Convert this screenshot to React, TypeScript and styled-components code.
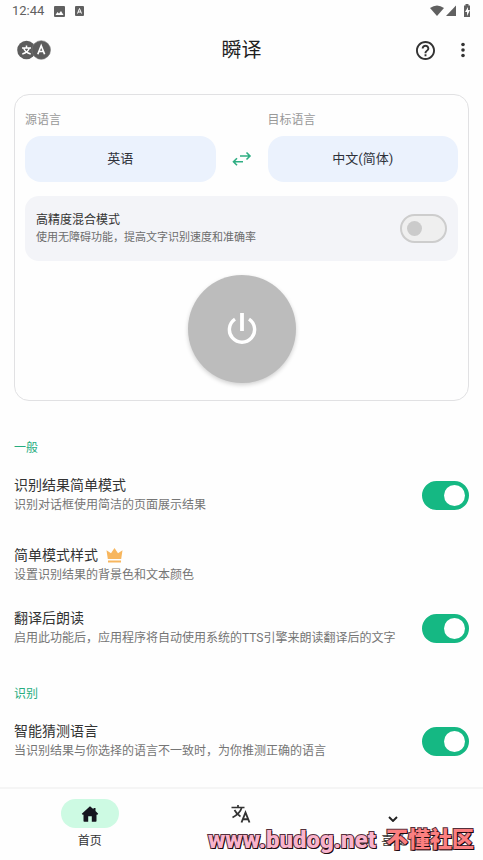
import React from "react";
import styled, { createGlobalStyle } from "styled-components";

const GlobalStyle = createGlobalStyle`
  *, *::before, *::after { box-sizing: border-box; }
  body {
    margin: 0;
    background: #fefefe;
    color: #2e2e30;
    font-family: Roboto, "Noto Sans CJK SC", sans-serif;
  }
  button, input { font: inherit; color: inherit; }
  button { border: 0; padding: 0; background: none; cursor: pointer; }
  h1, h2, p { margin: 0; font-weight: 400; }
  svg { display: block; }
`;

const Screen = styled.div`
  display: flex;
  flex-direction: column;
  min-height: 100vh;
`;

const StatusBar = styled.div`
  display: flex;
  align-items: center;
  justify-content: space-between;
  height: 22px;
  padding: 0 12px;
  color: #606060;
  font-size: 13px;
  line-height: 22px;
`;

const StatusGroup = styled.div`
  display: flex;
  align-items: center;
  gap: 10px;
`;

const AppBar = styled.header`
  display: grid;
  grid-template-columns: 1fr auto 1fr;
  align-items: center;
  height: 56px;
  padding: 0 14px;
`;

const Brand = styled.div`
  padding-left: 3px;
`;

const AppTitle = styled.h1`
  font-size: 20px;
  line-height: 28px;
  color: #1f1f1f;
`;

const Actions = styled.div`
  display: flex;
  align-items: center;
  justify-content: flex-end;
  gap: 22px;
  color: #333;
`;

const Content = styled.main`
  flex: 1;
  padding: 16px 14px 0;
`;

const Card = styled.section`
  display: flex;
  flex-direction: column;
  align-items: center;
  padding: 16px 10px 17px;
  border: 1px solid #e1e1e3;
  border-radius: 15px;
`;

const Languages = styled.div`
  display: grid;
  grid-template-columns: 1fr 52px 1fr;
  align-items: end;
  justify-items: center;
  width: 100%;
`;

const LanguageField = styled.div`
  display: flex;
  flex-direction: column;
  gap: 7px;
  width: 100%;
`;

const FieldLabel = styled.span`
  font-size: 12px;
  line-height: 18px;
  color: #999;
`;

const LanguageButton = styled.button`
  height: 46px;
  border-radius: 16px;
  background: #ebf2fd;
  font-size: 13px;
  line-height: 18px;
  color: #2e313a;
`;

const SwapButton = styled.button`
  display: flex;
  align-items: center;
  height: 46px;
  color: #2fae83;
`;

const ModePanel = styled.label`
  display: flex;
  align-items: center;
  justify-content: space-between;
  width: 100%;
  height: 65px;
  margin: 14px 0;
  padding: 0 11px;
  border-radius: 14px;
  background: #f3f4f8;
`;

const ModeTitle = styled.p`
  padding-top: 1px;
  font-size: 12px;
  line-height: 17px;
  color: #333;
`;

const ModeNote = styled.p`
  font-size: 11px;
  line-height: 17px;
  color: #6c6c6c;
`;

const Switch = styled.input.attrs({ type: "checkbox", role: "switch" })`
  appearance: none;
  flex: none;
  display: flex;
  align-items: center;
  width: 47px;
  height: 29px;
  margin: 0;
  padding: 0 5px;
  border: 2px solid #cdcdcd;
  border-radius: 15px;
  background: #efefef;

  &::before {
    content: "";
    width: 15px;
    height: 15px;
    border-radius: 50%;
    background: #cbcbcb;
  }

  &:checked {
    justify-content: flex-end;
    padding: 0 2px;
    border-color: #15b883;
    background: #15b883;
  }

  &:checked::before {
    width: 21px;
    height: 21px;
    background: #fff;
  }
`;

const PowerButton = styled.button`
  display: flex;
  align-items: center;
  justify-content: center;
  width: 108px;
  height: 108px;
  border-radius: 50%;
  background: #bcbcbc;
  color: #fff;
  box-shadow: 0 2px 4px rgba(0, 0, 0, 0.18);
`;

const SectionTitle = styled.h2<{ $top: number }>`
  margin-top: ${(p) => p.$top}px;
  font-size: 12px;
  line-height: 18px;
  color: #27ad80;
`;

const Setting = styled.label<{ $top: number }>`
  display: flex;
  align-items: center;
  justify-content: space-between;
  margin-top: ${(p) => p.$top}px;
`;

const SettingTitle = styled.p`
  display: flex;
  align-items: center;
  gap: 8px;
  font-size: 14px;
  line-height: 20px;
  color: #333;
`;

const SettingNote = styled.p`
  font-size: 12px;
  line-height: 20px;
  color: #757575;
`;

const NavBar = styled.nav`
  position: relative;
  display: grid;
  grid-template-columns: repeat(3, 1fr);
  align-items: start;
  height: 73px;
  padding: 10px 14px 0;
  border-top: 2px solid #f5f5f5;
`;

const NavItem = styled.button`
  display: flex;
  flex-direction: column;
  align-items: center;
  gap: 3px;
  font-size: 12px;
  line-height: 20px;
  color: #333;
`;

const NavIcon = styled.span<{ $active?: boolean }>`
  display: flex;
  align-items: center;
  justify-content: center;
  width: 58px;
  height: 29px;
  border-radius: 15px;
  background: ${(p) => (p.$active ? "#cdfae3" : "transparent")};
`;

const Watermark = styled.div`
  position: absolute;
  right: 9px;
  bottom: 5px;
  display: flex;
  align-items: center;
  gap: 10px;
  line-height: 30px;
  white-space: nowrap;
  pointer-events: none;
`;

const WatermarkText = styled.span<{ $fill: string; $size: number }>`
  font-size: ${(p) => p.$size}px;
  font-weight: 900;
  color: ${(p) => p.$fill};
  -webkit-text-stroke: 2px #54303c;
  paint-order: stroke fill;
  text-shadow: 1px 1px #1c0a0e;
`;

const ImageIcon = () => (
  <svg width="11" height="11" viewBox="0 0 22 22" fill="currentColor" aria-hidden="true">
    <path fillRule="evenodd" d="M2 0h18a2 2 0 0 1 2 2v18a2 2 0 0 1-2 2H2a2 2 0 0 1-2-2V2a2 2 0 0 1 2-2Zm1 18h16l-5-8-4 5-3-3Z" />
  </svg>
);

const LetterIcon = () => (
  <svg width="9" height="10" viewBox="0 0 18 20" aria-hidden="true">
    <rect width="18" height="20" rx="2" fill="currentColor" />
    <path d="m5 15 4-10 4 10M6 12h6" fill="none" stroke="#fff" strokeWidth="2" />
  </svg>
);

const SignalIcons = () => (
  <svg width="41" height="14" viewBox="0 0 41 14" fill="currentColor" aria-hidden="true">
    <path d="M0 4Q7-1 14 4L7 12Z" />
    <path d="M26 1.500V12H16Z" />
    <path fillRule="evenodd" d="M34 1.500H35.500V0h3v1.500H40v11.500h-6ZM38 3l-3 5h2v4l3-6h-2Z" />
  </svg>
);

const BrandIcon = () => (
  <svg width="34" height="20" viewBox="0 0 34 20" role="img" aria-label="翻译">
    <circle cx="9.500" cy="10" r="9.300" fill="#5d5d5d" />
    <circle cx="24.200" cy="10" r="9.300" fill="#5d5d5d" stroke="#777" strokeWidth=".6" />
    <g fill="none" stroke="#fff" strokeWidth="1.500">
      <path d="M5 8h9M9.500 5.500V8M12.300 8Q11 12.500 5.300 14M6.700 8Q8 12.500 13.700 14" />
      <path d="m20.800 14.200 3.400-8.400 3.400 8.400M21.900 11.500h4.600" strokeWidth="1.700" />
    </g>
  </svg>
);

const HelpIcon = () => (
  <svg width="19" height="19" viewBox="2 2 20 20" fill="currentColor" aria-hidden="true">
    <path d="M11 18h2v-2h-2v2zm1-16C6.480 2 2 6.480 2 12s4.480 10 10 10 10-4.480 10-10S17.520 2 12 2zm0 18c-4.410 0-8-3.590-8-8s3.590-8 8-8 8 3.590 8 8-3.590 8-8 8zm0-14c-2.210 0-4 1.790-4 4h2c0-1.100.9-2 2-2s2 .9 2 2c0 2-3 1.750-3 5h2c0-2.250 3-2.500 3-5 0-2.210-1.790-4-4-4z" />
  </svg>
);

const MoreIcon = () => (
  <svg width="12" height="16" viewBox="0 0 12 16" fill="currentColor" aria-hidden="true">
    <circle cx="6" cy="2.500" r="1.800" />
    <circle cx="6" cy="8" r="1.800" />
    <circle cx="6" cy="13.500" r="1.800" />
  </svg>
);

const SwapIcon = () => (
  <svg width="20" height="16" viewBox="0 0 20 16" fill="none" stroke="currentColor" strokeWidth="1.600" aria-hidden="true">
    <path d="M8 5h10M14.500 1.500 18 5l-3.500 3.500M11 10.700H1.500M5 7.200 1.500 10.700l3.500 3.500" />
  </svg>
);

const PowerIcon = () => (
  <svg width="32" height="34" viewBox="0 0 32 34" fill="none" stroke="currentColor" strokeWidth="3.400" aria-hidden="true">
    <path d="M16 1v18" strokeWidth="3.800" />
    <path d="M9 7.200a12.600 12.600 0 1 0 14 0" />
  </svg>
);

const CrownIcon = () => (
  <svg width="17" height="15" viewBox="0 0 17 15" fill="#f7b65e" role="img" aria-label="高级功能">
    <path d="m.5 2.200 4.500 3L8.500 0 12 5.200l4.500-3L15.200 11H1.800ZM2 12.500h13V14.500H2Z" />
  </svg>
);

const HomeIcon = () => (
  <svg width="18" height="16" viewBox="0 0 18 16" fill="#15151f" aria-hidden="true">
    <path d="M9 .3.800 7.800Q.8 8.800 2.500 8.800V15q0 .8.800.8h3.900v-5.500h3.600v5.500h3.900q.8 0 .8-.8V8.800q1.700 0 1.700-1L14.500 5V2h-2v1.300Z" />
  </svg>
);

const TranslateIcon = () => (
  <svg width="20" height="20" viewBox="0 0 20 20" fill="none" stroke="#333" strokeWidth="1.700" aria-hidden="true">
    <path d="M.5 3.500h13M7 1v2.500M10.800 3.500Q9 9.500 1.500 13.500M3.500 6q2 4 6 6.500" />
    <path d="m10.500 18.500 4-10 4 10M11.800 15.200h5.400" strokeWidth="1.900" />
  </svg>
);

const ChevronIcon = () => (
  <svg width="10" height="16" viewBox="0 0 10 16" fill="none" stroke="#222" strokeWidth="1.900" aria-hidden="true">
    <path d="m1 11 4 4 4-4" />
  </svg>
);

export default function App() {
  return (
    <Screen>
      <GlobalStyle />
      <StatusBar>
        <StatusGroup>
          <span>12:44</span>
          <ImageIcon />
          <LetterIcon />
        </StatusGroup>
        <SignalIcons />
      </StatusBar>
      <AppBar>
        <Brand><BrandIcon /></Brand>
        <AppTitle>瞬译</AppTitle>
        <Actions>
          <button type="button" aria-label="帮助"><HelpIcon /></button>
          <button type="button" aria-label="更多"><MoreIcon /></button>
        </Actions>
      </AppBar>
      <Content>
        <Card>
          <Languages>
            <LanguageField>
              <FieldLabel id="source">源语言</FieldLabel>
              <LanguageButton type="button" aria-describedby="source">英语</LanguageButton>
            </LanguageField>
            <SwapButton type="button" aria-label="交换语言"><SwapIcon /></SwapButton>
            <LanguageField>
              <FieldLabel id="target">目标语言</FieldLabel>
              <LanguageButton type="button" aria-describedby="target">中文(简体)</LanguageButton>
            </LanguageField>
          </Languages>
          <ModePanel>
            <div>
              <ModeTitle>高精度混合模式</ModeTitle>
              <ModeNote>使用无障碍功能，提高文字识别速度和准确率</ModeNote>
            </div>
            <Switch />
          </ModePanel>
          <PowerButton type="button" aria-label="启动"><PowerIcon /></PowerButton>
        </Card>

        <SectionTitle $top={38}>一般</SectionTitle>
        <Setting $top={18}>
          <div>
            <SettingTitle>识别结果简单模式</SettingTitle>
            <SettingNote>识别对话框使用简洁的页面展示结果</SettingNote>
          </div>
          <Switch defaultChecked />
        </Setting>
        <Setting as="div" $top={30}>
          <div>
            <SettingTitle>简单模式样式<CrownIcon /></SettingTitle>
            <SettingNote>设置识别结果的背景色和文本颜色</SettingNote>
          </div>
        </Setting>
        <Setting $top={23}>
          <div>
            <SettingTitle>翻译后朗读</SettingTitle>
            <SettingNote>启用此功能后，应用程序将自动使用系统的TTS引擎来朗读翻译后的文字</SettingNote>
          </div>
          <Switch defaultChecked />
        </Setting>
        <SectionTitle $top={37}>识别</SectionTitle>
        <Setting $top={18}>
          <div>
            <SettingTitle>智能猜测语言</SettingTitle>
            <SettingNote>当识别结果与你选择的语言不一致时，为你推测正确的语言</SettingNote>
          </div>
          <Switch defaultChecked />
        </Setting>
      </Content>
      <NavBar>
        <NavItem type="button" aria-current="page">
          <NavIcon $active><HomeIcon /></NavIcon>
          首页
        </NavItem>
        <NavItem type="button">
          <NavIcon><TranslateIcon /></NavIcon>
          翻译
        </NavItem>
        <NavItem type="button">
          <NavIcon><ChevronIcon /></NavIcon>
          喜爱
        </NavItem>
        <Watermark>
          <WatermarkText $fill="#f9b3cb" $size={24}>www.budog.net</WatermarkText>
          <WatermarkText $fill="#fb7f80" $size={22}>不懂社区</WatermarkText>
        </Watermark>
      </NavBar>
    </Screen>
  );
}
